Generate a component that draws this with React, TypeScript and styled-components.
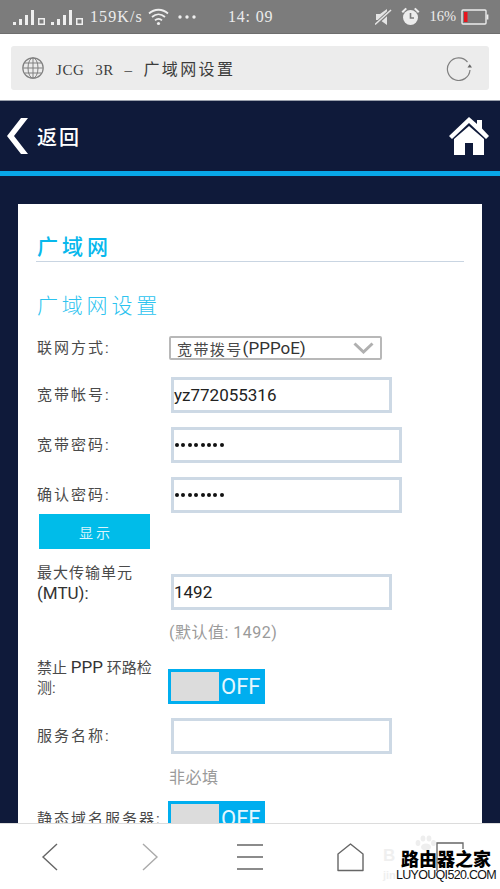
import React from "react";
import styled, { createGlobalStyle } from "styled-components";

const Global = createGlobalStyle`
  html, body { margin: 0; padding: 0; background: #0f1a3a; }
  * { box-sizing: border-box; }
`;

const CJK = `"Noto Sans CJK SC", sans-serif`;
const LATIN_CJK = `Roboto, "Noto Sans CJK SC", sans-serif`;
const SERIF_CJK = `"Liberation Serif", "Noto Sans CJK SC", serif`;

const Page = styled.div`
  width: 500px;
  height: 889px;
  display: flex;
  flex-direction: column;
  overflow: hidden;
  position: relative;
`;

const StatusBar = styled.div`
  height: 34px;
  flex: none;
  background: #7c7c7c;
  border-bottom: 1px solid #6e6e6e;
  display: flex;
  align-items: center;
  padding: 0 11px 0 13px;
  color: #ececec;
  font-family: ${SERIF_CJK};
  font-size: 16px;
`;

const StatusLeft = styled.div`
  width: 215px;
  display: flex;
  align-items: center;
  flex: none;
`;

const Speed = styled.span`
  letter-spacing: 1.1px;
  margin: 0 5px 0 1px;
  white-space: nowrap;
`;

const MoreSlot = styled.span`
  display: flex;
  margin-left: 8px;
`;

const Clock = styled.span`
  font-size: 16px;
  letter-spacing: 0.8px;
  white-space: nowrap;
`;

const StatusRight = styled.div`
  margin-left: auto;
  display: flex;
  align-items: center;
  gap: 9px;
`;

const Percent = styled.span`
  font-size: 14.5px;
  margin-right: -4px;
`;

const AddressArea = styled.div`
  height: 67px;
  flex: none;
  background: #fff;
  border-bottom: 1px solid #9aa0ac;
  padding: 12px 11px 11px;
`;

const AddressField = styled.div`
  height: 44px;
  background: #ececec;
  border-radius: 3px;
  display: flex;
  align-items: center;
  padding: 0 16px 0 11px;
`;

const AddressTitle = styled.span`
  margin-left: 12px;
  font-family: ${SERIF_CJK};
  font-size: 16px;
  letter-spacing: 2.4px;
  color: #3c3c3c;
  white-space: pre;
`;

const AddressLatin = styled.span`
  font-size: 15px;
  letter-spacing: 0.6px;
  word-spacing: 1px;
`;

const Reload = styled.span`
  margin-left: auto;
  display: flex;
`;

const NavBar = styled.div`
  height: 70px;
  flex: none;
  background: #0f1a3a;
  display: flex;
  align-items: center;
  padding: 0 11px 0 7px;
`;

const BackLabel = styled.span`
  margin-left: 8px;
  font-family: ${CJK};
  font-size: 20px;
  font-weight: 500;
  letter-spacing: 2px;
  color: #fff;
`;

const HomeLink = styled.span`
  margin-left: auto;
  display: flex;
`;

const NavLine = styled.div`
  height: 5px;
  flex: none;
  background: #08a7e8;
`;

const Content = styled.div`
  flex: 1;
  min-height: 0;
  overflow: hidden;
  background: #0f1a3a;
  padding: 28px 18px 0;
`;

const Card = styled.div`
  background: #fff;
  padding: 27px 18px 40px;
  height: 800px;
`;

const Heading = styled.h1`
  margin: 0;
  height: 30px;
  font-family: ${CJK};
  font-size: 21px;
  line-height: 28px;
  font-weight: 500;
  letter-spacing: 4px;
  color: #08b8ec;
  padding-left: 1px;
`;

const Rule = styled.div`
  height: 1px;
  background: #c9d5e2;
`;

const SubHeading = styled.h2`
  margin: 28px 0 18px;
  height: 28px;
  font-family: ${CJK};
  font-size: 21px;
  line-height: 28px;
  font-weight: 300;
  letter-spacing: 3.8px;
  color: #2cc3ef;
  padding-left: 1px;
`;

const Row = styled.div<{ $mt?: number; $top?: boolean }>`
  display: flex;
  align-items: ${(p) => (p.$top ? "flex-start" : "center")};
  margin-top: ${(p) => p.$mt ?? 0}px;
`;

const Label = styled.div<{ $lift?: number; $ls?: number }>`
  width: 135px;
  flex: none;
  padding-left: 1px;
  margin-top: ${(p) => -(p.$lift ?? 0)}px;
  font-family: ${LATIN_CJK};
  font-size: 15px;
  line-height: 20px;
  letter-spacing: ${(p) => p.$ls ?? 2}px;
  color: #4a4a4a;
  white-space: nowrap;
`;

const LabelLatin = styled.span`
  font-size: 17px;
  letter-spacing: 0;
  color: #333;
`;

const SelectBox = styled.div`
  margin-left: -2px;
  width: 213px;
  height: 24px;
  border: 2px solid #b8b8b8;
  border-radius: 2px;
  display: flex;
  align-items: center;
  padding: 0 6px 0 6px;
  font-family: ${LATIN_CJK};
  font-size: 15px;
  letter-spacing: 1.4px;
  color: #4a4a4a;
  white-space: nowrap;
`;

const SelectLatin = styled.span`
  font-size: 17px;
  letter-spacing: 0;
  color: #333;
`;

const Chevron = styled.span`
  margin-left: auto;
  display: flex;
`;

const TextBox = styled.div<{ $w: number }>`
  width: ${(p) => p.$w}px;
  height: 36px;
  border: 3px solid #cdd9e5;
  background: #fff;
  display: flex;
  align-items: center;
  font-family: Roboto, sans-serif;
  font-size: 17px;
  color: #222;
`;

const Dots = styled.span`
  display: flex;
  gap: 2.4px;
  padding-left: 1px;
`;

const Dot = styled.i`
  width: 4px;
  height: 4px;
  border-radius: 50%;
  background: #111;
`;

const ShowButton = styled.div`
  width: 111px;
  height: 35px;
  margin: 1px 0 0 3px;
  padding-left: 3px;
  background: #00bce9;
  display: flex;
  align-items: center;
  justify-content: center;
  font-family: ${CJK};
  font-size: 14px;
  letter-spacing: 3px;
  color: #d9f5fc;
`;

const Hint = styled.div<{ $mt: number }>`
  margin: ${(p) => p.$mt}px 0 0 133px;
  height: 20px;
  font-family: ${LATIN_CJK};
  font-size: 16px;
  line-height: 20px;
  letter-spacing: 0.5px;
  color: #9a9a9a;
`;

const Toggle = styled.div`
  margin-left: -3px;
  width: 97px;
  height: 35px;
  background: #00aeef;
  padding: 3px;
  display: flex;
  align-items: center;
`;

const Knob = styled.div`
  width: 48px;
  height: 29px;
  background: #dcdcdc;
  flex: none;
`;

const ToggleText = styled.span`
  margin-left: 2px;
  font-family: Roboto, sans-serif;
  font-size: 22px;
  font-weight: 400;
  color: #e6f7fe;
`;

const BottomBar = styled.div`
  height: 66px;
  flex: none;
  background: #fff;
  border-top: 1px solid #dcdcdc;
  display: grid;
  grid-template-columns: repeat(5, 100px);
  align-items: center;
  justify-items: center;
  padding-top: 1px;
  position: relative;
`;

const Faint = styled.span<{ $left: number; $top: number; $size: number }>`
  position: absolute;
  left: ${(p) => p.$left}px;
  top: ${(p) => p.$top}px;
  font-family: "Liberation Sans", sans-serif;
  font-size: ${(p) => p.$size}px;
  line-height: 1;
  font-weight: 700;
  color: #efefef;
`;

const Paw = styled.span`
  position: absolute;
  left: 414px;
  top: 835px;
  display: flex;
`;

const Watermark = styled.div`
  position: absolute;
  left: 397px;
  top: 848px;
  width: 98px;
  display: flex;
  flex-direction: column;
  align-items: center;
`;

const WatermarkTitle = styled.span`
  font-family: ${CJK};
  font-size: 18px;
  line-height: 21px;
  font-weight: 900;
  color: #000;
  white-space: nowrap;
`;

const WatermarkUrl = styled.span`
  font-family: "Liberation Sans", sans-serif;
  font-size: 12.5px;
  line-height: 13px;
  letter-spacing: -0.7px;
  color: #111;
  white-space: nowrap;
`;

const Signal = ({ n }: { n: string }) => (
  <svg width="38" height="20" viewBox="0 0 38 20">
    <g fill="#efefef">
      <rect x="0" y="15" width="3" height="3" />
      <rect x="6" y="12" width="3" height="6" />
      <rect x="12" y="8" width="3" height="10" />
      <rect x="18" y="3" width="3" height="15" />
      <rect x="25" y="11" width="7" height="7" />
    </g>
    <rect x="26.5" y="12.5" width="4" height="4" fill="#7c7c7c" />
  </svg>
);

const Wifi = () => (
  <svg width="21" height="18" viewBox="0 0 21 18" fill="none" stroke="#efefef" strokeWidth="1.8">
    <path d="M1 5.5 C6.5 0.5 14.5 0.5 20 5.5" />
    <path d="M4 9 C8 5.5 13 5.5 17 9" />
    <path d="M7 12.3 C9 10.5 12 10.5 14 12.3" />
    <circle cx="10.5" cy="15.5" r="1.6" fill="#efefef" stroke="none" />
  </svg>
);

const More = () => (
  <svg width="20" height="6" viewBox="0 0 20 6" fill="#efefef">
    <circle cx="3" cy="3" r="1.7" />
    <circle cx="10" cy="3" r="1.7" />
    <circle cx="17" cy="3" r="1.7" />
  </svg>
);

const Mute = () => (
  <svg width="17" height="18" viewBox="0 0 17 18">
    <path d="M1 6 H5 L12 1 V17 L5 12 H1 Z" fill="#e4e4e4" />
    <path d="M0 17 L16 2" stroke="#7c7c7c" strokeWidth="3.5" />
    <path d="M0 16.5 L16 2" stroke="#e4e4e4" strokeWidth="1.6" />
  </svg>
);

const Alarm = () => (
  <svg width="19" height="19" viewBox="0 0 19 19">
    <circle cx="9.5" cy="10.5" r="7.5" fill="#ececec" />
    <path d="M9.5 6 V11 H13" stroke="#7c7c7c" strokeWidth="1.6" fill="none" />
    <path d="M0.5 4.5 L4.5 0.8 L6 2 L2 6 Z M18.5 4.5 L14.5 0.8 L13 2 L17 6 Z" fill="#ececec" />
  </svg>
);

const Battery = () => (
  <svg width="28" height="16" viewBox="0 0 28 16">
    <rect x="1" y="1" width="24" height="14" rx="1" fill="none" stroke="#ececec" strokeWidth="1.4" />
    <rect x="3" y="3" width="3.5" height="10" fill="#e8141c" />
    <rect x="25.6" y="5.5" width="1.8" height="5" fill="#ececec" />
  </svg>
);

const Globe = () => (
  <svg width="22" height="22" viewBox="0 0 22 22" fill="none" stroke="#808080" strokeWidth="1">
    <circle cx="11" cy="11" r="10.2" strokeWidth="1.2" />
    <ellipse cx="11" cy="11" rx="5" ry="10.2" />
    <path d="M11 1 V21 M1 11 H21 M2.4 6 H19.6 M2.4 16 H19.6" />
  </svg>
);

const ReloadIcon = () => (
  <svg width="27" height="26" viewBox="0 0 27 26" fill="none">
    <path d="M21.5 7 A11.3 11.3 0 1 0 24 15" stroke="#808080" strokeWidth="1.2" />
    <path d="M21.5 14.5 L26 14.5 L23.7 11.3 Z" fill="#666" transform="translate(0 -2)" />
  </svg>
);

const BackChevron = () => (
  <svg width="22" height="36" viewBox="0 0 22 36">
    <path d="M21 0 L7 18 L21 36 L14 36 L0 18 L14 0 Z" fill="#fff" />
  </svg>
);

const House = () => (
  <svg width="40" height="39" viewBox="0 0 40 39" fill="#fff">
    <path d="M20 0 L28 7 V3 H33 V11.5 L40 19 L37 22 L20 6 L3 22 L0 19 Z" />
    <path d="M5 22 L20 9 L35 22 V38 H24 V26 H16 V38 H5 Z" />
  </svg>
);

const SelectChevron = () => (
  <svg width="21" height="12" viewBox="0 0 21 12" fill="none">
    <path d="M1.5 1.5 L10.5 10 L19.5 1.5" stroke="#b0b0b0" strokeWidth="3" />
  </svg>
);

const BackNav = () => (
  <svg width="18" height="28" viewBox="0 0 18 28" fill="none" stroke="#666" strokeWidth="1.4">
    <path d="M16 1 L2 14 L16 27" />
  </svg>
);

const ForwardNav = () => (
  <svg width="18" height="28" viewBox="0 0 18 28" fill="none" stroke="#aaa" strokeWidth="1.4">
    <path d="M2 1 L16 14 L2 27" />
  </svg>
);

const MenuNav = () => (
  <svg width="28" height="26" viewBox="0 0 28 26" fill="none" stroke="#666" strokeWidth="1.3">
    <path d="M1 1 H27 M1 13 H27 M1 25 H27" />
  </svg>
);

const HomeNav = () => (
  <svg width="27" height="29" viewBox="0 0 27 29" fill="none" stroke="#666" strokeWidth="1.4">
    <path d="M13.5 1 L26 11 V27.5 H1 V11 Z" strokeLinejoin="round" />
  </svg>
);

const TabsNav = () => (
  <svg width="28" height="32" viewBox="0 0 28 32" fill="none" stroke="#666" strokeWidth="1.3">
    <path d="M1 8 V2 H27 V8 M1 8 V30" />
  </svg>
);

const PawIcon = () => (
  <svg width="22" height="16" viewBox="0 0 22 16" fill="#eeeeee">
    <ellipse cx="4" cy="8" rx="2.4" ry="3" />
    <ellipse cx="9" cy="3.5" rx="2.4" ry="3" />
    <ellipse cx="15" cy="3.5" rx="2.4" ry="3" />
    <ellipse cx="19.5" cy="8" rx="2.4" ry="3" />
    <ellipse cx="12" cy="12" rx="5" ry="3.6" />
  </svg>
);

const PasswordDots = () => (
  <Dots>
    {Array.from({ length: 8 }, (_, i) => (
      <Dot key={i} />
    ))}
  </Dots>
);

export default function App() {
  return (
    <Page>
      <Global />
      <StatusBar>
        <StatusLeft>
          <Signal n="1" />
          <Signal n="2" />
          <Speed>159K/s</Speed>
          <Wifi />
          <MoreSlot>
            <More />
          </MoreSlot>
        </StatusLeft>
        <Clock>14: 09</Clock>
        <StatusRight>
          <Mute />
          <Alarm />
          <Percent>16%</Percent>
          <Battery />
        </StatusRight>
      </StatusBar>

      <AddressArea>
        <AddressField>
          <Globe />
          <AddressTitle>
            <AddressLatin>JCG  3R  –  </AddressLatin>广域网设置
          </AddressTitle>
          <Reload>
            <ReloadIcon />
          </Reload>
        </AddressField>
      </AddressArea>

      <NavBar>
        <BackChevron />
        <BackLabel>返回</BackLabel>
        <HomeLink>
          <House />
        </HomeLink>
      </NavBar>
      <NavLine />

      <Content>
        <Card>
          <Heading>广域网</Heading>
          <Rule />
          <SubHeading>广域网设置</SubHeading>

          <Row>
            <Label>联网方式:</Label>
            <SelectBox>
              宽带拨号<SelectLatin>(PPPoE)</SelectLatin>
              <Chevron>
                <SelectChevron />
              </Chevron>
            </SelectBox>
          </Row>

          <Row $mt={17}>
            <Label>宽带帐号:</Label>
            <TextBox $w={221}>yz772055316</TextBox>
          </Row>

          <Row $mt={14}>
            <Label>宽带密码:</Label>
            <TextBox $w={231}>
              <PasswordDots />
            </TextBox>
          </Row>

          <Row $mt={14}>
            <Label>确认密码:</Label>
            <TextBox $w={231}>
              <PasswordDots />
            </TextBox>
          </Row>

          <ShowButton>显示</ShowButton>

          <Row $mt={25} $top>
            <Label $lift={11} $ls={1}>
              最大传输单元
              <br />
              <LabelLatin>(MTU):</LabelLatin>
            </Label>
            <TextBox $w={221}>1492</TextBox>
          </Row>

          <Hint $mt={13}>(默认值: 1492)</Hint>

          <Row $mt={26} $top>
            <Label $lift={12} $ls={0}>
              禁止 <LabelLatin>PPP</LabelLatin> 环路检
              <br />
              测:
            </Label>
            <Toggle>
              <Knob />
              <ToggleText>OFF</ToggleText>
            </Toggle>
          </Row>

          <Row $mt={14}>
            <Label>服务名称:</Label>
            <TextBox $w={221} />
          </Row>

          <Hint $mt={14}>非必填</Hint>

          <Row $mt={13}>
            <Label>静态域名服务器:</Label>
            <Toggle>
              <Knob />
              <ToggleText>OFF</ToggleText>
            </Toggle>
          </Row>
        </Card>
      </Content>

      <BottomBar>
        <BackNav />
        <ForwardNav />
        <MenuNav />
        <HomeNav />
        <TabsNav />
      </BottomBar>
      <Faint $left={383} $top={847} $size={17}>B</Faint>
      <Faint $left={383} $top={870} $size={11}>jin</Faint>
      <Paw>
        <PawIcon />
      </Paw>
      <Watermark>
        <WatermarkTitle>路由器之家</WatermarkTitle>
        <WatermarkUrl>LUYOUQI520.COM</WatermarkUrl>
      </Watermark>
    </Page>
  );
}
